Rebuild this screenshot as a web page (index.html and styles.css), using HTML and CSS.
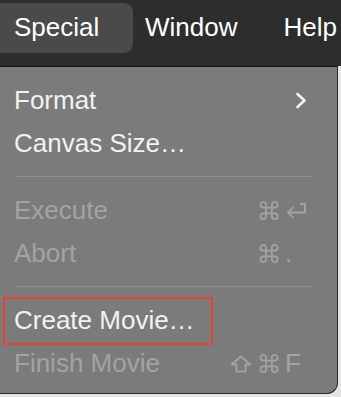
FILE: index.html
```html
<!DOCTYPE html>
<html>
<head>
  <meta charset="UTF-8">
  <title>Special menu</title>
  <link rel="stylesheet" href="styles.css">
</head>
<body>
<div class="menubar">
  <span class="bar-item active">Special</span>
  <span class="bar-item window">Window</span>
  <span class="bar-item help">Help</span>
</div>

<div class="menu">
  <div class="row">
    <span>Format</span>
    <svg class="chevron" width="12" height="17" viewBox="0 0 12 17"><polyline points="2.5,2 9.5,8.5 2.5,15"/></svg>
  </div>
  <div class="row"><span>Canvas Size…</span></div>

  <div class="sep"></div>

  <div class="row disabled">
    <span>Execute</span>
    <span class="shortcut">
      <span class="mods">
        <svg class="key-icon" width="20" height="19" viewBox="0 0 20 20"><path d="M7 16 V4 A3 3 0 1 0 4 7 H16 A3 3 0 1 0 13 4 V16 A3 3 0 1 0 16 13 H4 A3 3 0 1 0 7 16 Z"/></svg>
      </span>
      <span class="key">
        <svg class="key-icon" width="22" height="18" viewBox="0 0 22 18"><path d="M15 2 H20 V10.5 H3 M8.5 5 L3 10.5 L8.5 16"/></svg>
      </span>
    </span>
  </div>
  <div class="row disabled">
    <span>Abort</span>
    <span class="shortcut">
      <span class="mods">
        <svg class="key-icon" width="20" height="19" viewBox="0 0 20 20"><path d="M7 16 V4 A3 3 0 1 0 4 7 H16 A3 3 0 1 0 13 4 V16 A3 3 0 1 0 16 13 H4 A3 3 0 1 0 7 16 Z"/></svg>
      </span>
      <span class="key">.</span>
    </span>
  </div>

  <div class="sep"></div>

  <div class="row marked"><span>Create Movie…</span></div>
  <div class="row disabled">
    <span>Finish Movie</span>
    <span class="shortcut">
      <span class="mods">
        <svg class="key-icon" width="22" height="18" viewBox="0 0 22 18"><path d="M11 1.5 L20.5 9.5 H15.5 V16.5 H6.5 V9.5 H1.5 Z"/></svg>
        <svg class="key-icon" width="20" height="19" viewBox="0 0 20 20"><path d="M7 16 V4 A3 3 0 1 0 4 7 H16 A3 3 0 1 0 13 4 V16 A3 3 0 1 0 16 13 H4 A3 3 0 1 0 7 16 Z"/></svg>
      </span>
      <span class="key">F</span>
    </span>
  </div>
</div>
</body>
</html>
```

FILE: styles.css
```css
body {
	margin: 0px;
	padding: 0px;
	background-color: #e4e4e4;
	font-family: "Liberation Sans", Arial, sans-serif;
	font-size: 26px;
	overflow: hidden;
}

.menubar {
	height: 66px;
	background-color: #2d2d2d;
	display: flex;
	align-items: flex-start;
	color: #ffffff;
}
.bar-item {
	margin-top: 3px;
	height: 50px;
	line-height: 48px;
	white-space: nowrap;
}
.bar-item.active {
	width: 119px;
	padding-left: 14px;
	background-color: #4a4a4a;
	border-radius: 0 9px 9px 0;
}
.bar-item.window { margin-left: 12px; }
.bar-item.help { margin-left: 46px; }

.menu {
	width: 337px;
	background-color: #7b7b7b;
	border-top: 1px solid #141414;
	border-right: 1px solid #2a2a2a;
	border-bottom: 1px solid #2a2a2a;
	border-bottom-right-radius: 11px;
	padding: 12px 0 8px 0;
	color: #f2f2f2;
}

.row {
	position: relative;
	height: 43px;
	line-height: 43px;
	padding: 0 30px 0 14px;
	display: flex;
	align-items: center;
	justify-content: space-between;
	white-space: nowrap;
}
.row.disabled { color: #a3a3a3; }

.row.marked::after {
	content: "";
	position: absolute;
	left: 3px;
	top: -2px;
	width: 206px;
	height: 44px;
	border: 2px solid #e8412c;
}

.sep {
	height: 1px;
	margin: 11px 25px 12px 15px;
	background-color: #8f8f8f;
}

.chevron {
	fill: none;
	stroke: #f2f2f2;
	stroke-width: 2.6;
	stroke-linecap: round;
	stroke-linejoin: round;
}

.shortcut {
	display: flex;
	align-items: center;
	gap: 6px;
}
.mods {
	display: flex;
	align-items: center;
	justify-content: flex-end;
	gap: 7px;
}
.key {
	width: 22px;
	display: flex;
	align-items: center;
}
.key-icon {
	fill: none;
	stroke: #a3a3a3;
	stroke-width: 1.9;
	stroke-linejoin: round;
}
```
